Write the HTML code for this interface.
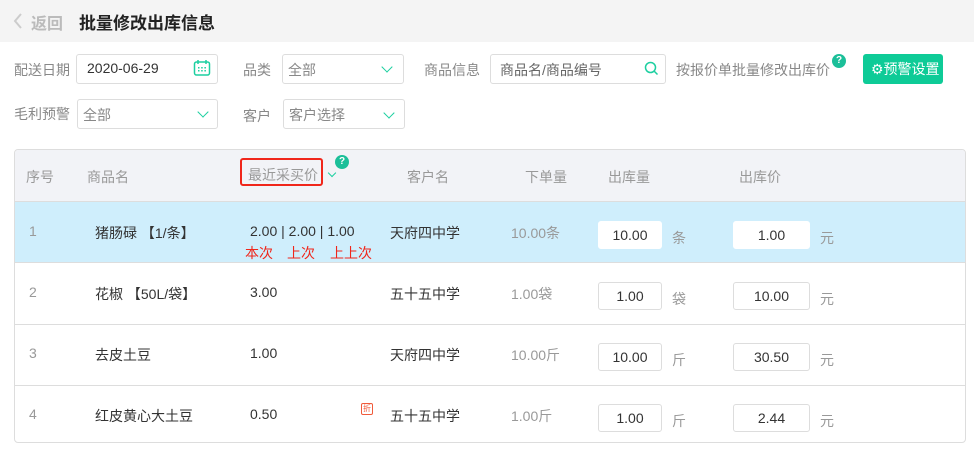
<!DOCTYPE html>
<html><head><meta charset="utf-8"><style>
*{margin:0;padding:0;box-sizing:border-box}
body{width:974px;height:449px;background:#fff;font-family:"Liberation Sans","Noto Sans CJK SC",sans-serif;font-size:14px;color:#333;position:relative;overflow:hidden}
.a{position:absolute;white-space:nowrap}
.lbl{color:#888;font-size:14px}
.box{position:absolute;border:1px solid #ddd;border-radius:3px;background:#fff;height:30px}
.chev{position:absolute;width:8px;height:8px;border-right:1.5px solid #1ccfa0;border-bottom:1.5px solid #1ccfa0;transform:rotate(45deg)}
.inp{position:absolute;background:#fff;border:1px solid #ddd;border-radius:3px;height:28px;text-align:center;line-height:26px;font-size:14px;color:#333}
.g{color:#999}
</style></head><body>
<div class="a" style="left:0;top:0;width:974px;height:42px;background:#f4f4f4"></div>
<svg class="a" style="left:13px;top:13px" width="10" height="16" viewBox="0 0 10 16"><path d="M8 1 L2 8 L8 15" fill="none" stroke="#ccc" stroke-width="2"/></svg>
<div class="a" style="left:31px;top:10px;font-size:16px;color:#bbb;font-weight:bold">返回</div>
<div class="a" style="left:79px;top:9px;font-size:17px;color:#222;font-weight:bold">批量修改出库信息</div>

<div class="a lbl" style="left:14px;top:60px">配送日期</div>
<div class="box" style="left:76px;top:54px;width:142px"></div>
<div class="a" style="left:87px;top:60px;color:#333">2020-06-29</div>
<svg class="a" style="left:193px;top:59px" width="18" height="18" viewBox="0 0 18 18"><rect x="1.5" y="3" width="15" height="13" rx="2" fill="none" stroke="#1ccfa0" stroke-width="1.5"/><line x1="5" y1="1" x2="5" y2="5" stroke="#1ccfa0" stroke-width="1.5"/><line x1="13" y1="1" x2="13" y2="5" stroke="#1ccfa0" stroke-width="1.5"/><g fill="#1ccfa0"><rect x="5" y="8" width="1.5" height="1.5"/><rect x="8.2" y="8" width="1.5" height="1.5"/><rect x="11.4" y="8" width="1.5" height="1.5"/><rect x="5" y="11" width="1.5" height="1.5"/><rect x="8.2" y="11" width="1.5" height="1.5"/><rect x="11.4" y="11" width="1.5" height="1.5"/></g></svg>

<div class="a lbl" style="left:243px;top:60px">品类</div>
<div class="box" style="left:282px;top:54px;width:122px"></div>
<div class="a" style="left:288px;top:60px;color:#888">全部</div>
<div class="chev" style="left:383px;top:63px"></div>

<div class="a lbl" style="left:424px;top:60px">商品信息</div>
<div class="box" style="left:490px;top:54px;width:176px"></div>
<div class="a" style="left:500px;top:60px;color:#666">商品名/商品编号</div>
<svg class="a" style="left:644px;top:61px" width="15" height="15" viewBox="0 0 15 15"><circle cx="6.5" cy="6.5" r="5" fill="none" stroke="#1ccfa0" stroke-width="1.5"/><line x1="10" y1="10" x2="13.5" y2="13.5" stroke="#1ccfa0" stroke-width="1.5"/></svg>
<div class="a lbl" style="left:676px;top:60px">按报价单批量修改出库价</div>
<div class="a" style="left:832px;top:54px;width:14px;height:14px;border-radius:50%;background:#1bbf99;color:#fff;font-size:10px;font-weight:bold;text-align:center;line-height:14px">?</div>
<div class="a" style="left:863px;top:54px;width:80px;height:30px;background:#0ecb97;border-radius:3px;color:#fff;font-size:14px;line-height:30px;padding-left:8px">⚙预警设置</div>

<div class="a lbl" style="left:14px;top:104px">毛利预警</div>
<div class="box" style="left:77px;top:99px;width:141px"></div>
<div class="a" style="left:83px;top:105px;color:#888">全部</div>
<div class="chev" style="left:199px;top:108px"></div>
<div class="a lbl" style="left:243px;top:106px">客户</div>
<div class="box" style="left:283px;top:99px;width:122px"></div>
<div class="a" style="left:289px;top:105px;color:#888">客户选择</div>
<div class="chev" style="left:385px;top:109px"></div>

<div class="a" style="left:14px;top:149px;width:952px;height:294px;border:1px solid #ddd;border-radius:4px;overflow:hidden">
<div class="a" style="left:0;top:0;width:952px;height:52px;background:#f2f3f7;border-bottom:1px solid #ddd"></div>
<div class="a" style="left:0;top:52px;width:952px;height:61px;background:#cfeefc;border-bottom:1px solid #ddd"></div>
<div class="a" style="left:0;top:174px;width:952px;height:1px;background:#ddd"></div>
<div class="a" style="left:0;top:235px;width:952px;height:1px;background:#ddd"></div>
</div>
<div class="a g" style="left:26px;top:167px">序号</div>
<div class="a g" style="left:87px;top:167px">商品名</div>
<div class="a" style="left:240px;top:158px;width:83px;height:28px;border:2px solid #f0261b;border-radius:3px"></div>
<div class="a g" style="left:248px;top:165px">最近采买价</div>
<div class="a" style="left:329px;top:170px;width:6px;height:6px;border-right:1.5px solid #1ccfa0;border-bottom:1.5px solid #1ccfa0;transform:rotate(45deg)"></div>
<div class="a" style="left:335px;top:155px;width:14px;height:14px;border-radius:50%;background:#1bbf99;color:#fff;font-size:10px;font-weight:bold;text-align:center;line-height:14px">?</div>
<div class="a g" style="left:407px;top:167px">客户名</div>
<div class="a g" style="left:525px;top:167px">下单量</div>
<div class="a g" style="left:608px;top:167px">出库量</div>
<div class="a g" style="left:739px;top:167px">出库价</div>

<!-- row1 -->
<div class="a g" style="left:29px;top:223px">1</div>
<div class="a" style="left:95px;top:223px">猪肠碌 【1/条】</div>
<div class="a" style="left:250px;top:223px">2.00 | 2.00 | 1.00</div>
<div class="a" style="left:245px;top:243px;color:#f0261b">本次</div>
<div class="a" style="left:287px;top:243px;color:#f0261b">上次</div>
<div class="a" style="left:330px;top:243px;color:#f0261b">上上次</div>
<div class="a" style="left:390px;top:223px">天府四中学</div>
<div class="a g" style="left:511px;top:223px">10.00条</div>
<div class="inp" style="left:598px;top:221px;width:64px;border-color:#fff">10.00</div><div class="a g" style="left:672px;top:228px">条</div>
<div class="inp" style="left:733px;top:221px;width:77px;border-color:#fff">1.00</div><div class="a g" style="left:820px;top:228px">元</div>
<!-- row2 -->
<div class="a g" style="left:29px;top:284px">2</div>
<div class="a" style="left:95px;top:284px">花椒 【50L/袋】</div>
<div class="a" style="left:250px;top:284px">3.00</div>
<div class="a" style="left:390px;top:284px">五十五中学</div>
<div class="a g" style="left:511px;top:284px">1.00袋</div>
<div class="inp" style="left:598px;top:282px;width:64px">1.00</div><div class="a g" style="left:672px;top:289px">袋</div>
<div class="inp" style="left:733px;top:282px;width:77px">10.00</div><div class="a g" style="left:820px;top:289px">元</div>
<!-- row3 -->
<div class="a g" style="left:29px;top:345px">3</div>
<div class="a" style="left:95px;top:345px">去皮土豆</div>
<div class="a" style="left:250px;top:345px">1.00</div>
<div class="a" style="left:390px;top:345px">天府四中学</div>
<div class="a g" style="left:511px;top:345px">10.00斤</div>
<div class="inp" style="left:598px;top:343px;width:64px">10.00</div><div class="a g" style="left:672px;top:350px">斤</div>
<div class="inp" style="left:733px;top:343px;width:77px">30.50</div><div class="a g" style="left:820px;top:350px">元</div>
<!-- row4 -->
<div class="a g" style="left:29px;top:406px">4</div>
<div class="a" style="left:95px;top:406px">红皮黄心大土豆</div>
<div class="a" style="left:250px;top:406px">0.50</div>
<div class="a" style="left:361px;top:403px;width:12px;height:12px;border:1px solid #f05a3a;border-radius:2px;color:#f05a3a;font-size:8px;line-height:10px;text-align:center">折</div>
<div class="a" style="left:390px;top:406px">五十五中学</div>
<div class="a g" style="left:511px;top:406px">1.00斤</div>
<div class="inp" style="left:598px;top:404px;width:64px">1.00</div><div class="a g" style="left:672px;top:411px">斤</div>
<div class="inp" style="left:733px;top:404px;width:77px">2.44</div><div class="a g" style="left:820px;top:411px">元</div>
</body></html>
